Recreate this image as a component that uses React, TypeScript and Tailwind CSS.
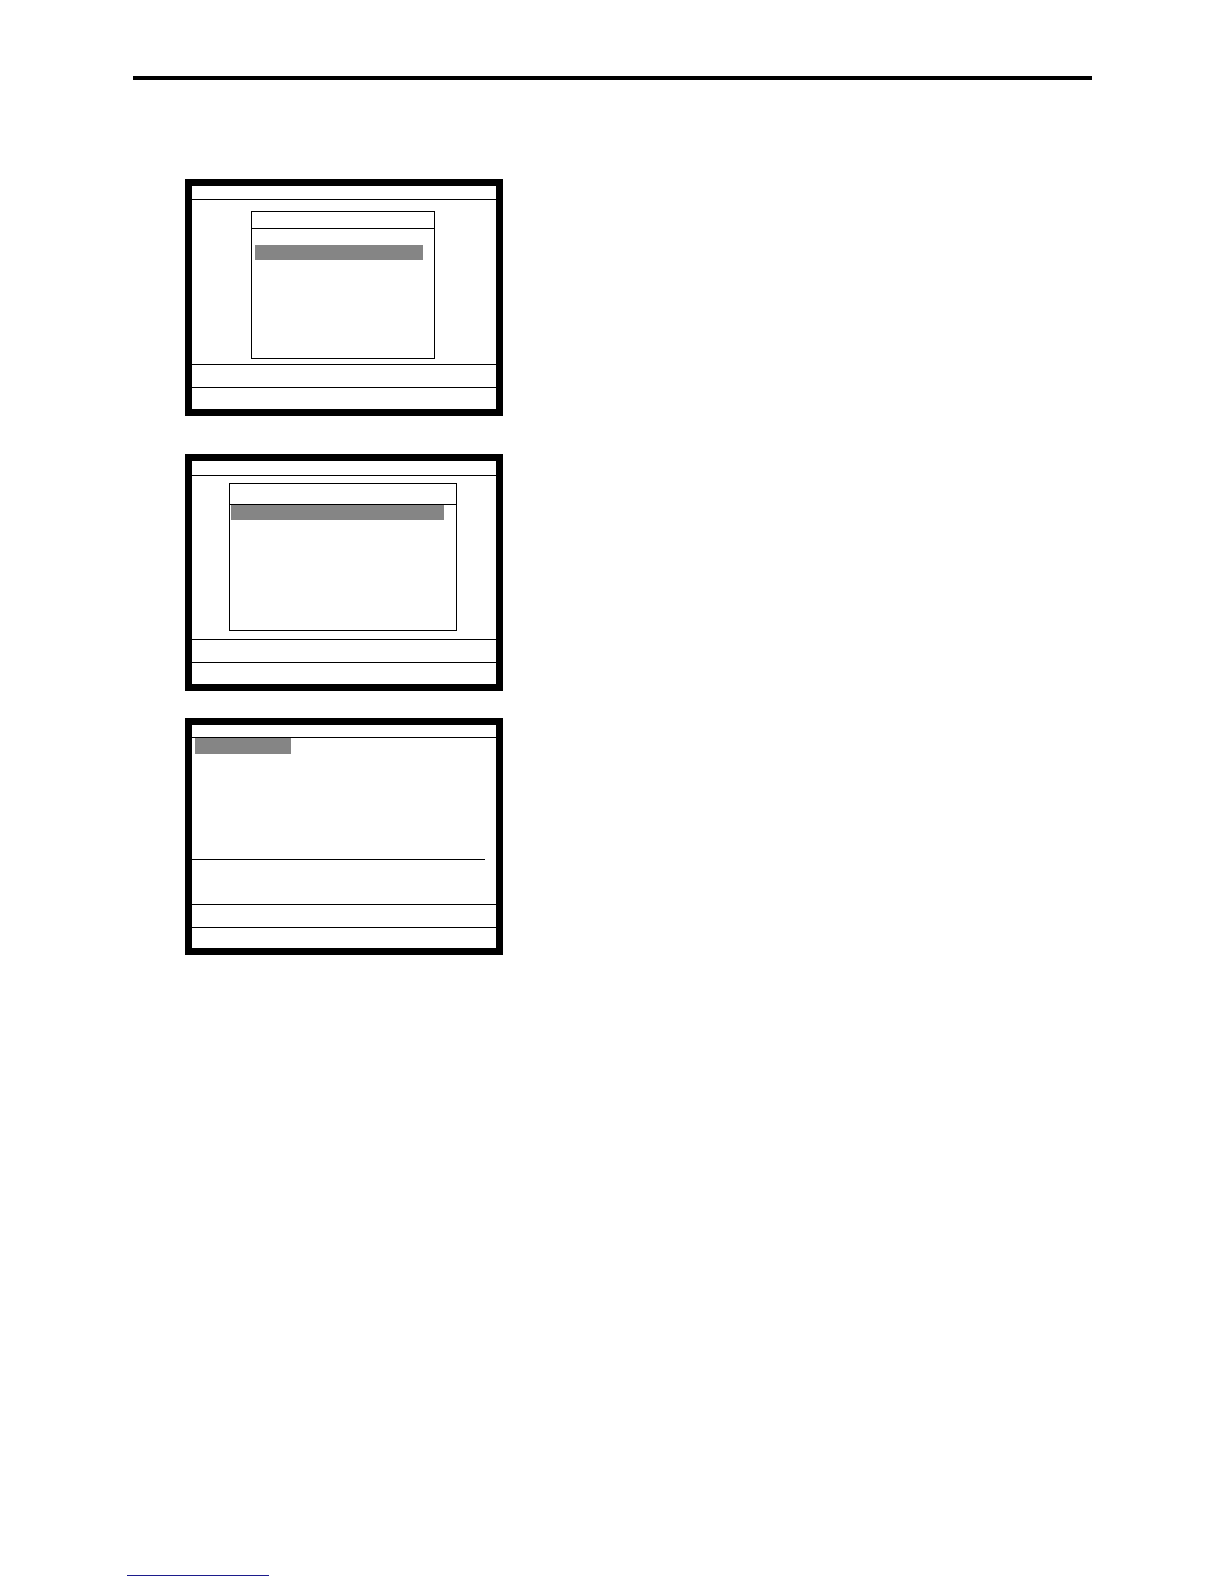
import React from "react";

function Screen({ children }: { children: React.ReactNode }) {
  return (
    <div className="flex h-[237px] w-[318px] flex-col border-[7px] border-black bg-white">
      {children}
    </div>
  );
}

function Footer() {
  return (
    <>
      <div className="h-[23px] shrink-0 border-b border-black" />
      <div className="h-[20px] shrink-0" />
    </>
  );
}

function MenuScreen() {
  return (
    <Screen>
      <div className="h-[14px] shrink-0 border-b border-black" />
      <div className="h-[165px] shrink-0 border-b border-black pt-[11px]">
        <div className="ml-[59px] h-[148px] w-[184px] border border-black">
          <div className="h-[17px] border-b border-black" />
          <div className="ml-[3px] mt-[16px] h-[15px] w-[168px] bg-[#858585]" />
        </div>
      </div>
      <Footer />
    </Screen>
  );
}

function WideMenuScreen() {
  return (
    <Screen>
      <div className="h-[15px] shrink-0 border-b border-black" />
      <div className="h-[164px] shrink-0 border-b border-black pt-[7px]">
        <div className="ml-[37px] h-[148px] w-[228px] border border-black">
          <div className="h-[21px] border-b border-black" />
          <div className="ml-px h-[15px] w-[213px] bg-[#858585]" />
        </div>
      </div>
      <Footer />
    </Screen>
  );
}

function EntryScreen() {
  return (
    <Screen>
      <div className="h-[13px] shrink-0 border-b border-black" />
      <div className="h-[121px] shrink-0">
        <div className="ml-[3px] h-[16px] w-[96px] bg-[#858585]" />
      </div>
      <div className="h-px w-[293px] shrink-0 bg-black" />
      <div className="h-[45px] shrink-0 border-b border-black" />
      <Footer />
    </Screen>
  );
}

export default function App() {
  return (
    <div className="flex h-[1584px] w-[1224px] flex-col bg-white">
      <div className="pl-[133px] pt-[76px]">
        <div className="h-[4px] w-[959px] bg-black" />
      </div>

      <div className="ml-[185px] mt-[99px] flex flex-col">
        <MenuScreen />
        <div className="mt-[38px]">
          <WideMenuScreen />
        </div>
        <div className="mt-[27px]">
          <EntryScreen />
        </div>
      </div>

      <div className="mt-auto pb-[8px] pl-[127px]">
        <div className="h-px w-[142px] bg-[#1c1c8c]" />
      </div>
    </div>
  );
}
